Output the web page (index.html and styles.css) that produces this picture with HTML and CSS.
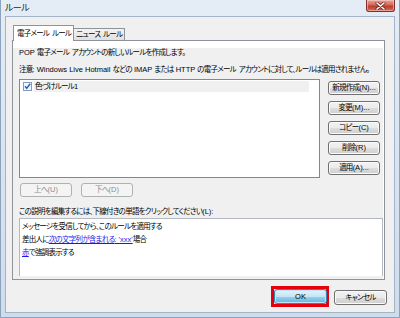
FILE: index.html
```html
<!DOCTYPE html>
<html lang="ja">
<head>
  <meta charset="UTF-8" />
  <title>ルール</title>
  <link rel="stylesheet" href="styles.css">
</head>
<body>

  <div class="window">
    <!-- Title bar -->
    <div class="titlebar">
      <span class="title">ルール</span>
      <div class="close-btn">
        <svg width="11" height="8" viewBox="0 0 11 8">
          <path d="M2 1 L9 7 M9 1 L2 7" stroke="#6b2a24" stroke-width="3" stroke-linecap="round" />
          <path d="M2 1 L9 7 M9 1 L2 7" stroke="#ffffff" stroke-width="1.6" stroke-linecap="round" />
        </svg>
      </div>
    </div>

    <div class="client">
      <!-- Tabs -->
      <div class="tabs">
        <div class="tab tab-active">電子メール ルール</div>
        <div class="tab">ニュース ルール</div>
      </div>

      <div class="panel">
        <div class="page">
          <p class="intro"><span class="en">POP </span>電子メール アカウントの新しいルールを作成します。</p>
          <p class="note">注意<span class="en">: Windows Live Hotmail </span>などの<span class="en"> IMAP </span>または<span class="en"> HTTP </span>の電子メール アカウントに対して、ルールは適用されません。</p>

          <div class="rules-row">
            <div class="rule-list">
              <div class="rule-item">
                <svg class="check" width="9" height="9" viewBox="0 0 9 9">
                  <rect x="0.5" y="0.5" width="8" height="8" fill="#f4f8fd" stroke="#7f9cc4" />
                  <path d="M2 4.3 L3.7 6.3 L7.2 1.8" stroke="#2b5fb8" stroke-width="1.4" fill="none" />
                </svg>
                <span class="rule-name">色づけルール<span class="en">1</span></span>
              </div>
            </div>

            <div class="side-buttons">
              <button class="btn">新規作成<span class="en">(N)...</span></button>
              <button class="btn">変更<span class="en">(M)...</span></button>
              <button class="btn">コピー<span class="en">(C)</span></button>
              <button class="btn">削除<span class="en">(R)</span></button>
              <button class="btn">適用<span class="en">(A)...</span></button>
            </div>
          </div>

          <div class="move-buttons">
            <button class="btn btn-disabled">上へ<span class="en">(U)</span></button>
            <button class="btn btn-disabled">下へ<span class="en">(D)</span></button>
          </div>

          <p class="hint">この説明を編集するには、下線付きの単語をクリックしてください<span class="en">(L):</span></p>

          <div class="description">
            <div>メッセージを受信してから、このルールを適用する</div>
            <div>差出人に<a class="link">次の文字列が含まれる<span class="en">: 'xxx'</span></a>場合</div>
            <div><a class="link">赤</a>で強調表示する</div>
          </div>
        </div>
      </div>

      <!-- Dialog buttons -->
      <div class="footer">
        <div class="highlight">
          <button class="btn btn-default"><span class="en">OK</span></button>
        </div>
        <button class="btn btn-cancel">キャンセル</button>
      </div>
    </div>
  </div>

</body>
</html>
```

FILE: styles.css
```css
* {
  box-sizing: border-box;
}

body {
  margin: 0;
  font-family: "Liberation Sans", "Noto Sans CJK JP", sans-serif;
  font-size: 7.5px;
  font-feature-settings: "palt";
  letter-spacing: -0.75px;
  word-spacing: 1.5px;
  color: #000000;
}

p {
  margin: 0;
}

/* latin runs keep their natural width */
.en {
  letter-spacing: 0;
  word-spacing: 0;
}

.window {
  width: 400px;
  height: 318px;
  display: flex;
  flex-direction: column;
  padding: 0 4px 4px 4px;
  border: 1px solid #8da2bd;
  border-top: none;
  background: linear-gradient(to bottom, #e4ecf5, #cfdcec);
}

.titlebar {
  height: 16px;
  display: flex;
  justify-content: space-between;
  align-items: flex-start;
}

.title {
  font-size: 9px;
  margin: 3px 0 0 0;
  line-height: 11px;
  letter-spacing: -0.6px;
  color: #1e1e1e;
}

.close-btn {
  width: 29px;
  height: 12px;
  display: flex;
  align-items: center;
  justify-content: center;
  border: 1px solid #7c3129;
  border-top: none;
  border-radius: 0 0 3px 3px;
  background: linear-gradient(to bottom, #e7a394, #d36a5a 45%, #c0392b 55%, #d3705f);
  box-shadow: inset 0 0 0 1px rgba(255, 220, 210, 0.5);
}

.client {
  flex: 1;
  display: flex;
  flex-direction: column;
  background-color: #f0f0f0;
  border: 1px solid #a3b3c8;
}

/* Tabs */
.tabs {
  display: flex;
  align-items: flex-end;
  height: 16px;
  margin: 8px 0 -1px 7px;
  position: relative;
  z-index: 1;
}

.tab {
  height: 12px;
  padding: 0 2px;
  line-height: 11px;
  border: 1px solid #8e9299;
  border-bottom: none;
  background: linear-gradient(to bottom, #f3f3f3, #e1e1e1);
  margin-bottom: 1px;
  margin-left: -1px;
  white-space: nowrap;
}

.tab-active {
  height: 16px;
  margin-left: 0;
  margin-bottom: 0;
  padding: 0 2px 0 3px;
  line-height: 15px;
  background: #ffffff;
  position: relative;
  z-index: 1;
}

.panel {
  height: 240px;
  margin: 0 9px 0 6px;
  border: 1px solid #8e9299;
  background-color: #ffffff;
  padding: 7px 1px 0 0;
  display: flex;
}

.page {
  flex: 1;
  background-color: #f0f0f0;
  padding: 0 0 0 6px;
}

.intro {
  line-height: 10px;
}

.note {
  line-height: 10px;
  margin-top: 7px;
  white-space: nowrap;
}

/* Rule list */
.rules-row {
  display: flex;
  margin-top: 4px;
}

.rule-list {
  width: 301px;
  height: 99px;
  background-color: #ffffff;
  border: 1px solid #828790;
  padding: 1px 0 0 3px;
}

.rule-item {
  display: flex;
  align-items: center;
  height: 11px;
}

.check {
  display: block;
}

.rule-name {
  width: 275px;
  height: 11px;
  line-height: 11px;
  margin-left: 2px;
  padding-left: 1px;
  background-color: #f0f0f0;
}

.side-buttons {
  display: flex;
  flex-direction: column;
  gap: 6px;
  margin: 2px 0 0 8px;
}

.btn {
  width: 52px;
  height: 14px;
  padding: 0;
  font-family: inherit;
  font-size: 7.5px;
  font-feature-settings: "palt";
  letter-spacing: -0.75px;
  line-height: 12px;
  color: #000000;
  border: 1px solid #707070;
  border-radius: 3px;
  background: linear-gradient(to bottom, #f2f2f2 0%, #ebebeb 50%, #dddddd 51%, #cfcfcf 100%);
  box-shadow: inset 0 0 0 1px #fbfbfb;
  text-align: center;
  white-space: nowrap;
}

.btn-disabled {
  color: #8d8d8d;
  border-color: #adb2b5;
  background: #f4f4f4;
  box-shadow: none;
}

.move-buttons {
  display: flex;
  gap: 9px;
  margin: 5px 0 0 1px;
}

.hint {
  line-height: 10px;
  margin-top: 10px;
}

.description {
  width: 364px;
  height: 58px;
  margin-top: 1px;
  background-color: #ffffff;
  border: 1px solid #b4b8c0;
  border-bottom: none;
  padding: 1px 0 0 2px;
  line-height: 13px;
}

.link {
  color: #1a1ae6;
  text-decoration: underline;
}

/* Dialog buttons */
.footer {
  flex: 1;
  display: flex;
  justify-content: flex-end;
  align-items: flex-start;
  gap: 5px;
  padding: 6px 7px 0 0;
}

.highlight {
  width: 58px;
  height: 21px;
  border: 3px solid #e6000b;
  padding: 0 1px 0 0;
}

.btn-default {
  width: 53px;
  height: 15px;
  border-color: #3c7fb1;
  background: linear-gradient(to bottom, #e5f4fc 0%, #c4e5f6 50%, #98d1ef 51%, #68b3db 100%);
  box-shadow: inset 0 0 0 1px #bfe3f7;
}

.btn-cancel {
  width: 53px;
  height: 15px;
  margin-top: 4px;
}
```
